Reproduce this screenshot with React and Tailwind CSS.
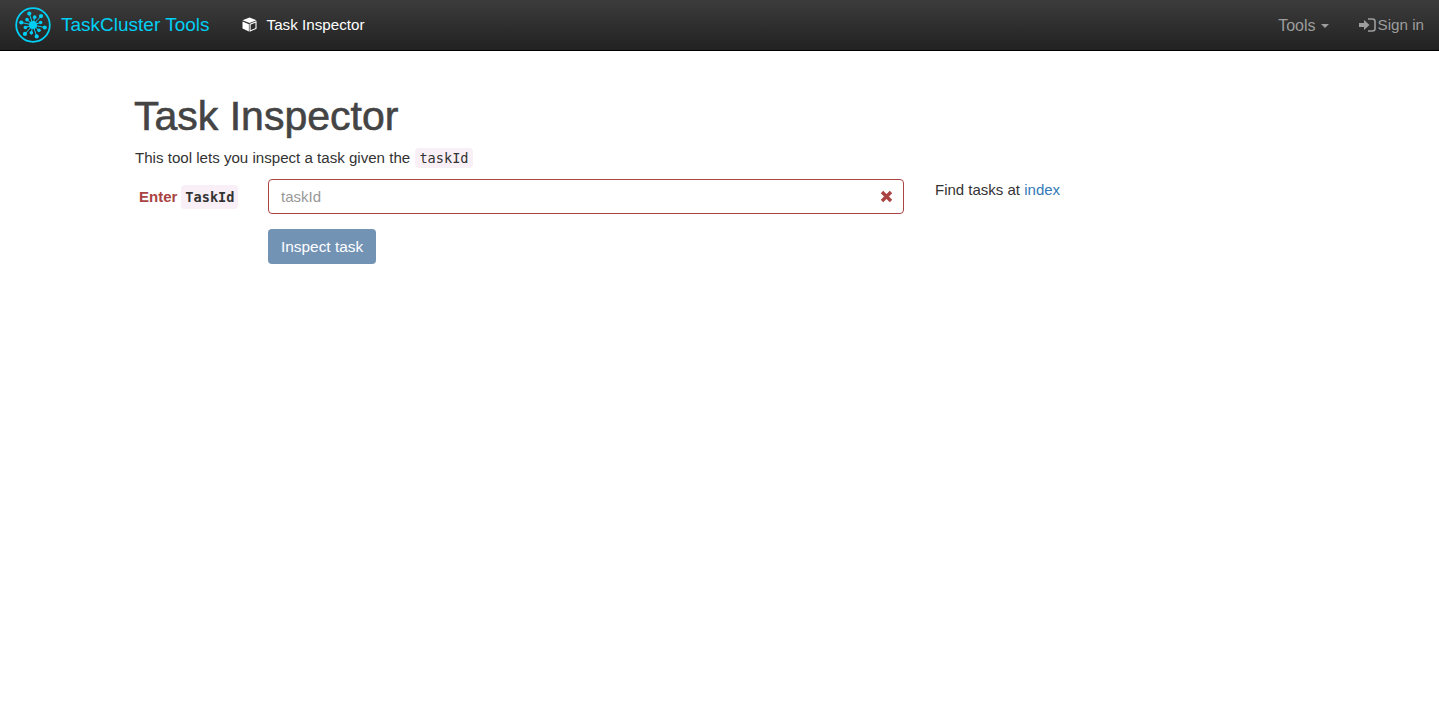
const spokes = [0, 1, 2, 3, 4, 5, 6, 7, 8, 9, 10, 11].map((i) => {
  const a = (i * 30 + 12) * Math.PI / 180
  const r = i % 2 === 0 ? 12 : 8
  return { x: 18 + Math.cos(a) * r, y: 18 + Math.sin(a) * r, dot: i % 2 === 0 ? 2.1 : 1.8 }
})

function Logo() {
  return (
    <svg width="36" height="36" viewBox="0 0 36 36" className="shrink-0">
      <circle cx="18" cy="18" r="16.8" fill="none" stroke="#00cff5" strokeWidth="1.8" />
      <circle cx="18" cy="18" r="4" fill="#00cff5" />
      {spokes.map((s, i) => (
        <g key={i}>
          <line x1="18" y1="18" x2={s.x} y2={s.y} stroke="#00cff5" strokeWidth="1" />
          <circle cx={s.x} cy={s.y} r={s.dot} fill="#00cff5" />
        </g>
      ))}
    </svg>
  )
}

function CubeIcon() {
  return (
    <svg width="15" height="15" viewBox="0 0 15 15" className="shrink-0">
      <path d="M7.5 0.5 L14.5 3.3 L7.5 6.1 L0.5 3.3 Z" fill="#fff" />
      <path d="M0.5 4.6 L6.9 7.2 L6.9 14.5 L0.5 11.6 Z" fill="#fff" />
      <path d="M8.1 7.2 L14 4.8 L14 11.4 L8.1 14 Z" fill="none" stroke="#fff" strokeWidth="1.1" />
    </svg>
  )
}

function SignInIcon() {
  return (
    <svg width="17" height="14" viewBox="0 0 17 14" className="shrink-0">
      <path d="M0 5 H5 V2 L10.5 7 L5 12 V9 H0 Z" fill="#9d9d9d" />
      <path d="M9 1 H13.5 Q16 1 16 3.5 V10.5 Q16 13 13.5 13 H9" fill="none" stroke="#9d9d9d" strokeWidth="1.6" />
    </svg>
  )
}

export default function App() {
  return (
    <div className="min-h-screen bg-white text-[15px] text-[#333] font-['Liberation_Sans',Arial,sans-serif]">

      {/* Top navigation */}
      <nav className="h-[51px] border-b border-black bg-gradient-to-b from-[#3c3c3c] to-[#222] pl-[15px] pr-[15px] flex items-center justify-between">
        <div className="flex items-center">
          <Logo />
          <span className="ml-[10px] text-[19px] text-[#00cff5]">TaskCluster Tools</span>
          <div className="ml-[32px] flex items-center gap-[10px] text-white text-[15.2px]">
            <CubeIcon />
            <span className="pt-px">Task Inspector</span>
          </div>
        </div>
        <div className="flex items-center text-[#9d9d9d] text-[15.2px]">
          <span className="pt-px text-[16px]">Tools</span>
          <span className="ml-[5px] mt-[2px] w-0 h-0 border-x-[4px] border-x-transparent border-t-[4px] border-t-[#9d9d9d]"></span>
          <div className="ml-[30px] flex items-center gap-[2px]">
            <SignInIcon />
            <span className="pt-px">Sign in</span>
          </div>
        </div>
      </nav>

      {/* Main content */}
      <div className="w-[1171px] mx-auto">
        <h1 className="mt-[40px] text-[41px] leading-[50px] font-medium text-[#444] [-webkit-text-stroke:0.6px_#444]">Task Inspector</h1>
        <p className="mt-[7px] ml-px leading-[20px] text-[15.1px]">
          This tool lets you inspect a task given the{' '}
          <code className="ml-px px-[4px] py-[2px] rounded bg-[#f9eff6] text-[#333] text-[13.6px] font-['DejaVu_Sans_Mono',monospace]">taskId</code>
        </p>

        <div className="mt-[11px] flex items-start">
          <div className="w-[134px] h-[35px] pl-[5px] pt-px flex items-center font-bold text-[#a94442] whitespace-nowrap">
            Enter
            <code className="ml-[4px] px-[4px] py-[2px] rounded bg-[#f9eff6] text-[#333] text-[13.6px] font-['DejaVu_Sans_Mono',monospace]">TaskId</code>
          </div>
          <div className="w-[636px]">
            <div className="relative">
              <input
                placeholder="taskId"
                className="w-full h-[35px] px-[12px] border border-[#a94442] rounded outline-none placeholder:text-[#999]"
              />
              <svg width="13" height="13" viewBox="0 0 13 13" className="absolute right-[11px] top-[11px]">
                <path d="M2 2 L11 11 M11 2 L2 11" stroke="#a94442" strokeWidth="3.4" />
              </svg>
            </div>
            <button className="mt-[15px] h-[35px] px-[13px] pt-px rounded bg-[#7393b5] text-white text-[15.4px]">Inspect task</button>
          </div>
          <p className="ml-[31px] mt-px leading-[20px]">
            Find tasks at <a className="text-[#337ab7]">index</a>
          </p>
        </div>
      </div>
    </div>
  )
}
